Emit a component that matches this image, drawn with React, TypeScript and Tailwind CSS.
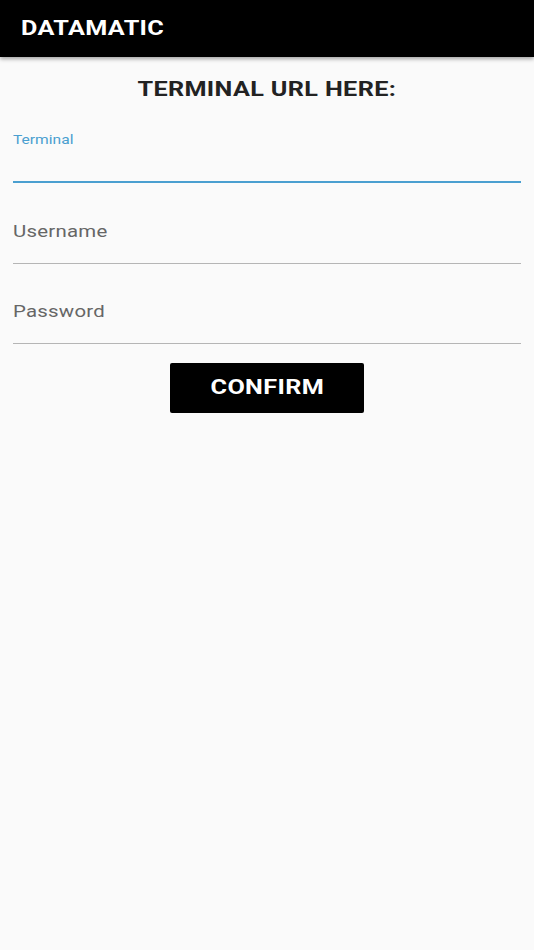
import React from "react";

export default function App() {
  return (
    <div className="min-h-[950px] w-full bg-[#fafafa] font-['Roboto',sans-serif]">
      <div className="h-[57px] bg-black flex items-center pl-[21px] shadow-[0_2px_4px_rgba(0,0,0,0.35)]">
        <span className="inline-block origin-left scale-x-[1.2] text-white font-bold text-[21px] leading-[21px] tracking-[0.3px]">DATAMATIC</span>
      </div>
      <div className="flex flex-col px-[13px]">
        <div className="mt-[22px] text-center leading-[21px]">
          <span className="inline-block scale-x-[1.2] font-bold text-[21px] text-[#222] tracking-[0.3px]">
            TERMINAL URL HERE:
          </span>
        </div>
        <div className="mt-[31px] leading-[13px]">
          <span className="inline-block origin-left scale-x-[1.2] text-[13px] text-[#4a9fd0]">Terminal</span>
        </div>
        <div className="mt-[35px] h-[2px] bg-[#4a9fd0]" />
        <div className="mt-[40px] leading-[17px]">
          <span className="inline-block origin-left scale-x-[1.2] text-[17px] text-[#666] tracking-[0.2px]">Username</span>
        </div>
        <div className="mt-[23px] h-[1px] bg-[#b5b5b5]" />
        <div className="mt-[39px] leading-[17px]">
          <span className="inline-block origin-left scale-x-[1.2] text-[17px] text-[#666] tracking-[0.2px]">Password</span>
        </div>
        <div className="mt-[23px] h-[1px] bg-[#b5b5b5]" />
        <div className="flex justify-center mt-[19px]">
          <button className="w-[194px] h-[50px] bg-black rounded-[2px] text-white font-bold text-[21px]">
            <span className="inline-block scale-x-[1.2] tracking-[0.3px]">CONFIRM</span>
          </button>
        </div>
      </div>
    </div>
  );
}
